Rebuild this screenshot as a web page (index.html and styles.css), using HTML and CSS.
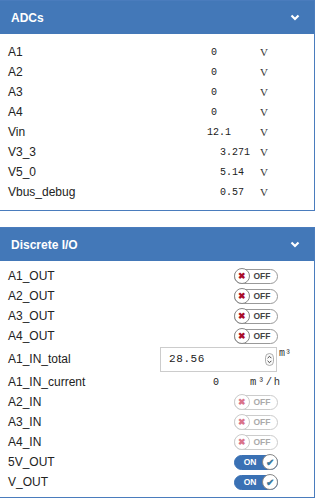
FILE: index.html
```html
<!DOCTYPE html>
<html lang="en">
<head>
    <meta charset="UTF-8">
    <title>I/O</title>
    <link rel="stylesheet" href="styles.css">
</head>
<body>
    <!-- ADC readings -->
    <div class="panel">
        <div class="panel-head">
            <span>ADCs</span>
            <svg class="chev" width="10" height="7" viewBox="0 0 10 7"><polyline points="1.5,1.5 5,5 8.5,1.5" fill="none" stroke="#fff" stroke-width="2.2"/></svg>
        </div>
        <div class="panel-body adc">
            <div class="row"><span class="lbl">A1</span><span class="val v0">0</span><span class="unit">V</span></div>
            <div class="row"><span class="lbl">A2</span><span class="val v0">0</span><span class="unit">V</span></div>
            <div class="row"><span class="lbl">A3</span><span class="val v0">0</span><span class="unit">V</span></div>
            <div class="row"><span class="lbl">A4</span><span class="val v0">0</span><span class="unit">V</span></div>
            <div class="row"><span class="lbl">Vin</span><span class="val v1">12.1</span><span class="unit">V</span></div>
            <div class="row"><span class="lbl">V3_3</span><span class="val v2">3.271</span><span class="unit">V</span></div>
            <div class="row"><span class="lbl">V5_0</span><span class="val v2">5.14</span><span class="unit">V</span></div>
            <div class="row"><span class="lbl">Vbus_debug</span><span class="val v2">0.57</span><span class="unit">V</span></div>
        </div>
    </div>

    <!-- Discrete I/O -->
    <div class="panel">
        <div class="panel-head">
            <span>Discrete I/O</span>
            <svg class="chev" width="10" height="7" viewBox="0 0 10 7"><polyline points="1.5,1.5 5,5 8.5,1.5" fill="none" stroke="#fff" stroke-width="2.2"/></svg>
        </div>
        <div class="panel-body dio">
            <div class="row"><span class="lbl">A1_OUT</span><span class="sw off"><span class="knob">&#10006;</span><span class="txt">OFF</span></span></div>
            <div class="row"><span class="lbl">A2_OUT</span><span class="sw off"><span class="knob">&#10006;</span><span class="txt">OFF</span></span></div>
            <div class="row"><span class="lbl">A3_OUT</span><span class="sw off"><span class="knob">&#10006;</span><span class="txt">OFF</span></span></div>
            <div class="row"><span class="lbl">A4_OUT</span><span class="sw off"><span class="knob">&#10006;</span><span class="txt">OFF</span></span></div>
            <div class="row row-input">
                <span class="lbl">A1_IN_total</span>
                <span class="numbox"><span>28.56</span>
                    <svg class="spin" width="9" height="13" viewBox="0 0 9 13"><rect x="0.5" y="0.5" width="8" height="12" rx="4" fill="#fafafa" stroke="#999" stroke-width="0.8"/><polyline points="2.6,5.2 4.5,3.3 6.4,5.2" fill="none" stroke="#444" stroke-width="1"/><polyline points="2.6,7.8 4.5,9.7 6.4,7.8" fill="none" stroke="#444" stroke-width="1"/></svg>
                </span>
                <span class="unit sup">m&sup3;</span>
            </div>
            <div class="row"><span class="lbl">A1_IN_current</span><span class="val cur">0</span><span class="unit rate">m&sup3;/h</span></div>
            <div class="row"><span class="lbl">A2_IN</span><span class="sw off dim"><span class="knob">&#10006;</span><span class="txt">OFF</span></span></div>
            <div class="row"><span class="lbl">A3_IN</span><span class="sw off dim"><span class="knob">&#10006;</span><span class="txt">OFF</span></span></div>
            <div class="row"><span class="lbl">A4_IN</span><span class="sw off dim"><span class="knob">&#10006;</span><span class="txt">OFF</span></span></div>
            <div class="row"><span class="lbl">5V_OUT</span><span class="sw on"><span class="txt">ON</span><span class="knob">&#10004;</span></span></div>
            <div class="row"><span class="lbl">V_OUT</span><span class="sw on"><span class="txt">ON</span><span class="knob">&#10004;</span></span></div>
        </div>
    </div>
</body>
</html>
```

FILE: styles.css
```css
html, body {
    margin: 0;
    background: #fff;
    font-family: 'Liberation Sans', Arial, sans-serif;
    color: #222;
}
.panel {
    width: 315px;
    box-sizing: border-box;
    border: 1px solid #4a7cbd;
    border-left: none;
    margin-bottom: 16px;
}
.panel-head {
    display: flex;
    align-items: center;
    justify-content: space-between;
    height: 33px;
    padding: 0 14px 0 11px;
    background: #4378b8;
    color: #fff;
    font-weight: bold;
    font-size: 12px;
}
.chev {
    display: block;
}
.panel-body {
    padding: 8px 0 8px 8px;
}
.dio {
    padding: 5px 0 5px 8px;
}
.row {
    display: flex;
    align-items: center;
    height: 20px;
    font-size: 12px;
}
.row-input {
    height: 26px;
}
.lbl {
    width: 150px;
}
.val {
    font-family: 'Liberation Mono', 'Courier New', monospace;
    font-size: 10px;
}
.v0 { margin-left: 53px; width: 49px; }
.v1 { margin-left: 49px; width: 53px; }
.v2 { margin-left: 62px; width: 40px; }
.unit {
    font-family: 'Liberation Serif', 'Times New Roman', serif;
    font-size: 11px;
    color: #333;
}
.cur { margin-left: 55px; width: 37px; }
.rate {
    font-family: 'Liberation Mono', monospace;
    font-size: 10.5px;
    letter-spacing: 1.6px;
}
.numbox {
    display: flex;
    align-items: center;
    justify-content: space-between;
    box-sizing: border-box;
    width: 117px;
    height: 25px;
    margin-left: 2px;
    padding: 0 2px 0 8px;
    border: 1px solid #ccc;
    font-family: 'Liberation Mono', monospace;
    font-size: 11px;
    letter-spacing: 0.6px;
}
.sup {
    font-family: 'Liberation Mono', monospace;
    font-size: 10px;
    color: #333;
    align-self: flex-start;
    margin: 2px 0 0 2px;
}
.sw {
    display: flex;
    align-items: center;
    box-sizing: border-box;
    width: 44px;
    height: 15px;
    margin-left: 76px;
    border: 1px solid #999;
    border-radius: 8px;
    font-size: 8.5px;
    font-weight: bold;
}
.sw .knob {
    display: flex;
    align-items: center;
    justify-content: center;
    box-sizing: border-box;
    width: 16px;
    height: 16px;
    margin: -1px;
    border: 1px solid #888;
    border-radius: 50%;
    background: #fff;
    font-size: 8.5px;
}
.sw .txt {
    flex: 1;
    text-align: center;
}
.off .knob {
    color: #a80d2a;
}
.off .txt {
    color: #444;
    padding-right: 2px;
}
.dim {
    border-color: #ccc;
}
.dim .knob {
    border-color: #ccc;
    color: #d9738a;
}
.dim .txt {
    color: #aaa;
}
.on {
    background: #3a71b4;
    border-color: #3a71b4;
}
.on .txt {
    color: #fff;
    padding-left: 2px;
}
.on .knob {
    color: #3c7a9c;
    font-size: 10px;
}
```
